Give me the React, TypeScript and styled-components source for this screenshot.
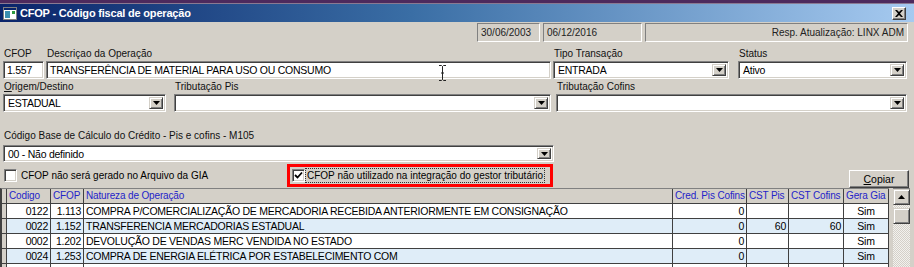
import React from 'react';
import styled, { createGlobalStyle } from 'styled-components';

const GlobalStyle = createGlobalStyle`
  html, body {
    margin: 0;
    padding: 0;
    background: #d4d0c8;
  }
  body {
    font-family: "Liberation Sans", Arial, sans-serif;
    font-size: 10px;
    color: #000;
  }
`;

type GridRowType = {
  cod: string;
  cfop: string;
  nat: string;
  cred: string;
  pis: string;
  cofins: string;
  gia: string;
};

const rows: GridRowType[] = [
  { cod: '0122', cfop: '1.113', nat: 'COMPRA P/COMERCIALIZAÇÃO DE MERCADORIA RECEBIDA ANTERIORMENTE EM CONSIGNAÇÃO', cred: '0', pis: '', cofins: '', gia: 'Sim' },
  { cod: '0022', cfop: '1.152', nat: 'TRANSFERENCIA MERCADORIAS ESTADUAL', cred: '0', pis: '60', cofins: '60', gia: 'Sim' },
  { cod: '0002', cfop: '1.202', nat: 'DEVOLUÇÃO DE VENDAS MERC VENDIDA NO ESTADO', cred: '0', pis: '', cofins: '', gia: 'Sim' },
  { cod: '0024', cfop: '1.253', nat: 'COMPRA DE ENERGIA ELÉTRICA POR ESTABELECIMENTO COM', cred: '0', pis: '', cofins: '', gia: 'Sim' },
  // last row only peeks in at the bottom edge
  { cod: '', cfop: '', nat: '', cred: '', pis: '', cofins: '', gia: '' },
];

const COLS = '5px 44px 33px 589px 74px 42px 55px 45px';

const App = () => {
  return (
    <>
      <GlobalStyle />
      <Window>
        <TopStrip />
        <TitleBar>
          <TitleIcon width="14" height="13" viewBox="0 0 14 13">
            <rect x="0.5" y="0.5" width="13" height="12" fill="#fff" stroke="#808080" />
            <rect x="1" y="1" width="12" height="2" fill="#0a246a" />
            <rect x="2" y="4" width="5" height="7" fill="#3a8fb0" />
            <rect x="9" y="4" width="3" height="3" fill="#2e9a3e" />
          </TitleIcon>
          <TitleText>CFOP - Código fiscal de operação</TitleText>
          <CloseButton>
            <svg width="8" height="7" viewBox="0 0 8 7">
              <path d="M0 0 L2 0 L4 2 L6 0 L8 0 L5 3.5 L8 7 L6 7 L4 5 L2 7 L0 7 L3 3.5 Z" fill="#000" />
            </svg>
          </CloseButton>
        </TitleBar>

        <InfoRow>
          <InfoPanel $w={63}>30/06/2003</InfoPanel>
          <InfoPanel $w={99}>06/12/2016</InfoPanel>
          <InfoPanel $w={263} $right>Resp. Atualização: LINX ADM</InfoPanel>
        </InfoRow>

        <Form>
          <FieldRow $top={6}>
            <Field $w={41}>
              <Label>CFOP</Label>
              <TextBox>1.557</TextBox>
            </Field>
            <Field $w={505} $ml={2}>
              <Label>Descriçao da Operação</Label>
              <TextBox>TRANSFERÊNCIA DE MATERIAL PARA USO OU CONSUMO</TextBox>
            </Field>
            <Field $w={176} $ml={2}>
              <Label>Tipo Transação</Label>
              <Combo value="ENTRADA" />
            </Field>
            <Field $w={169} $ml={9}>
              <Label>Status</Label>
              <Combo value="Ativo" />
            </Field>
          </FieldRow>

          <FieldRow $top={2}>
            <Field $w={163}>
              <Label><u>O</u>rigem/Destino</Label>
              <Combo value="ESTADUAL" />
            </Field>
            <Field $w={377} $ml={8}>
              <Label>Tributação Pis</Label>
              <Combo value="" />
            </Field>
            <Field $w={351} $ml={5}>
              <Label>Tributação Cofins</Label>
              <Combo value="" />
            </Field>
          </FieldRow>

          <FieldRow $top={18}>
            <Field $w={551} $gap={3}>
              <Label>Código Base de Cálculo do Crédito - Pis e cofins - M105</Label>
              <Combo value="00 - Não definido" $h={17} />
            </Field>
          </FieldRow>

          <CheckRow>
            <CheckItem>
              <CheckBox />
              <span>CFOP não será gerado no Arquivo da GIA</span>
            </CheckItem>
            <Highlight>
              <CheckBox>
                <svg width="9" height="9" viewBox="0 0 9 9">
                  <path d="M1 4 L3.5 6.5 L8 1.5" fill="none" stroke="#000" strokeWidth="1.8" />
                </svg>
              </CheckBox>
              <FocusText>CFOP não utilizado na integração do gestor tributário</FocusText>
            </Highlight>
            <Spacer />
            <Button>
              <u>C</u>opiar
            </Button>
          </CheckRow>
        </Form>

        <GridArea>
          <Grid>
            <HeaderRow>
              <IndicatorCell />
              <HeadCell>Codigo</HeadCell>
              <HeadCell>CFOP</HeadCell>
              <HeadCell>Natureza de Operação</HeadCell>
              <HeadCell>Cred. Pis Cofins</HeadCell>
              <HeadCell>CST Pis</HeadCell>
              <HeadCell>CST Cofins</HeadCell>
              <HeadCell>Gera Gia</HeadCell>
            </HeaderRow>
            {rows.map((r, i) => (
              <DataRow key={i} $alt={i % 2 === 1}>
                <IndicatorCell />
                <Cell $align="right">{r.cod}</Cell>
                <Cell $align="right">{r.cfop}</Cell>
                <Cell>{r.nat}</Cell>
                <Cell $align="right">{r.cred}</Cell>
                <Cell $align="right">{r.pis}</Cell>
                <Cell $align="right">{r.cofins}</Cell>
                <Cell $align="center">{r.gia}</Cell>
              </DataRow>
            ))}
          </Grid>
          <ScrollBar>
            <ScrollButton>
              <svg width="7" height="4" viewBox="0 0 7 4">
                <path d="M3.5 0 L7 4 L0 4 Z" fill="#000" />
              </svg>
            </ScrollButton>
            <ScrollThumb />
          </ScrollBar>
        </GridArea>

        <IBeam width="9" height="16" viewBox="0 0 9 16">
          <path d="M1 0.5 H3.5 L4.5 1.5 L5.5 0.5 H8 M4.5 1.5 V14.5 M1 15.5 H3.5 L4.5 14.5 L5.5 15.5 H8 M3 8 H6" fill="none" stroke="#222" strokeWidth="1" />
        </IBeam>
      </Window>
    </>
  );
};

const Combo = ({ value, $h }: { value: string; $h?: number }) => (
  <ComboBox $h={$h}>
    <ComboText>{value}</ComboText>
    <DropButton>
      <svg width="7" height="4" viewBox="0 0 7 4">
        <path d="M0 0 L7 0 L3.5 4 Z" fill="#000" />
      </svg>
    </DropButton>
  </ComboBox>
);

const Window = styled.div`
  position: relative;
  width: 914px;
  height: 267px;
  overflow: hidden;
  background: #d4d0c8;
  display: flex;
  flex-direction: column;
`;

const TopStrip = styled.div`
  height: 3px;
  background: #4d2a5d;
  border-bottom: 1px solid #8a7a92;
  flex-shrink: 0;
`;

const TitleBar = styled.div`
  height: 18px;
  flex-shrink: 0;
  display: flex;
  align-items: center;
  padding: 0 8px 0 3px;
  background: linear-gradient(to right, #0a246a 0%, #3a6ea5 45%, #a6caf0 100%);
`;

const TitleIcon = styled.svg`
  margin-right: 3px;
`;

const TitleText = styled.div`
  flex: 1;
  color: #fff;
  font-weight: bold;
  font-size: 11px;
  letter-spacing: -0.2px;
`;

const CloseButton = styled.div`
  width: 14px;
  height: 13px;
  box-sizing: border-box;
  background: #d4d0c8;
  border: 1px solid;
  border-color: #fff #404040 #404040 #fff;
  box-shadow: inset -1px -1px #808080;
  display: flex;
  align-items: center;
  justify-content: center;
`;

const InfoRow = styled.div`
  height: 19px;
  margin-top: 1px;
  display: flex;
  justify-content: flex-end;
  gap: 2px;
  padding-right: 6px;
  flex-shrink: 0;
`;

const InfoPanel = styled.div<{ $w: number; $right?: boolean }>`
  width: ${p => p.$w}px;
  box-sizing: border-box;
  border: 1px solid;
  border-color: #808080 #fff #fff #808080;
  padding: 0 3px;
  line-height: 17px;
  color: #222;
  text-align: ${p => (p.$right ? 'right' : 'left')};
  white-space: nowrap;
  & + & {
    margin-left: 1px;
  }
`;

const Form = styled.div`
  padding-left: 3px;
  flex-shrink: 0;
`;

const FieldRow = styled.div<{ $top: number }>`
  display: flex;
  margin-top: ${p => p.$top}px;
`;

const Field = styled.div<{ $w: number; $ml?: number; $gap?: number }>`
  width: ${p => p.$w}px;
  margin-left: ${p => p.$ml ?? 0}px;
  display: flex;
  flex-direction: column;
  gap: ${p => p.$gap ?? 1}px;
`;

const Label = styled.div`
  height: 12px;
  line-height: 12px;
  padding-left: 1px;
  white-space: nowrap;
  color: #111;
`;

const sunken = `
  box-sizing: border-box;
  background: #fff;
  border: 1px solid;
  border-color: #808080 #fff #fff #808080;
  box-shadow: inset 1px 1px #404040, inset -1px -1px #d4d0c8;
`;

const narrowText = `
  font-size: 10.5px;
  letter-spacing: -0.25px;
`;

const TextBox = styled.div`
  ${sunken}
  ${narrowText}
  height: 18px;
  padding: 0 3px;
  line-height: 16px;
  white-space: nowrap;
`;

const ComboBox = styled.div<{ $h?: number }>`
  ${sunken}
  height: ${p => p.$h ?? 18}px;
  display: flex;
  align-items: center;
  padding: 2px;
`;

const ComboText = styled.div`
  ${narrowText}
  flex: 1;
  padding-left: 2px;
  white-space: nowrap;
  overflow: hidden;
`;

const DropButton = styled.div`
  width: 14px;
  height: 100%;
  box-sizing: border-box;
  background: #d4d0c8;
  border: 1px solid;
  border-color: #d4d0c8 #404040 #404040 #d4d0c8;
  box-shadow: inset 1px 1px #fff, inset -1px -1px #808080;
  display: flex;
  align-items: center;
  justify-content: center;
`;

const CheckRow = styled.div`
  height: 26px;
  display: flex;
  align-items: center;
  padding-right: 5px;
`;

const CheckItem = styled.div`
  width: 284px;
  display: flex;
  align-items: center;
  gap: 4px;
  padding-left: 1px;
  box-sizing: border-box;
  white-space: nowrap;
`;

const CheckBox = styled.div`
  width: 13px;
  height: 13px;
  ${sunken}
  display: flex;
  align-items: center;
  justify-content: center;
  flex-shrink: 0;
`;

const Highlight = styled.div`
  width: 266px;
  height: 23px;
  box-sizing: border-box;
  border: 3px solid #ff0000;
  display: flex;
  align-items: center;
  padding-left: 2px;
  gap: 1px;
  white-space: nowrap;
`;

const FocusText = styled.span`
  outline: 1px dotted #333;
  padding: 0 1px;
  line-height: 13px;
`;

const Spacer = styled.div`
  flex: 1;
`;

const Button = styled.div`
  width: 60px;
  height: 18px;
  align-self: flex-end;
  box-sizing: border-box;
  background: #d4d0c8;
  border: 1px solid;
  border-color: #fff #404040 #404040 #fff;
  box-shadow: inset -1px -1px #808080;
  display: flex;
  align-items: center;
  justify-content: center;
  font-size: 10.5px;
`;

const GridArea = styled.div`
  flex: 1;
  display: flex;
  min-height: 0;
  padding-right: 4px;
`;

const Grid = styled.div`
  width: 889px;
  box-sizing: border-box;
  border-top: 1px solid #808080;
  border-left: 2px solid #404040;
  background: #fff;
  overflow: hidden;
`;

const HeaderRow = styled.div`
  display: grid;
  grid-template-columns: ${COLS};
  height: 15px;
  background: #d4d0c8;
  border-bottom: 1px solid #404040;
  box-sizing: border-box;
`;

const DataRow = styled.div<{ $alt: boolean }>`
  display: grid;
  grid-template-columns: ${COLS};
  height: 15px;
  box-sizing: border-box;
  border-bottom: 1px solid #404040;
  background: ${p => (p.$alt ? '#dfedf8' : '#fff')};
`;

const IndicatorCell = styled.div`
  background: #d4d0c8;
  border-right: 1px solid #404040;
`;

const HeadCell = styled.div`
  border-right: 1px solid #404040;
  padding: 0 2px;
  line-height: 14px;
  color: #2424c8;
  white-space: nowrap;
  overflow: hidden;
  letter-spacing: -0.15px;
`;

const Cell = styled.div<{ $align?: 'left' | 'right' | 'center' }>`
  ${narrowText}
  border-right: 1px solid #404040;
  padding: 0 2px;
  line-height: 14px;
  text-align: ${p => p.$align ?? 'left'};
  white-space: nowrap;
  overflow: hidden;
`;

const ScrollBar = styled.div`
  width: 17px;
  margin-left: 4px;
  box-sizing: border-box;
  border-top: 1px solid #808080;
  background: repeating-conic-gradient(#f2f1ee 0 25%, #d4d0c8 0 50%) 0 0 / 2px 2px;
  display: flex;
  flex-direction: column;
`;

const ScrollButton = styled.div`
  height: 16px;
  box-sizing: border-box;
  background: #d4d0c8;
  border: 1px solid;
  border-color: #d4d0c8 #404040 #404040 #d4d0c8;
  box-shadow: inset 1px 1px #fff, inset -1px -1px #808080;
  display: flex;
  align-items: center;
  justify-content: center;
`;

const ScrollThumb = styled(ScrollButton)`
  margin-top: 3px;
`;

const IBeam = styled.svg`
  position: absolute;
  left: 438px;
  top: 65px;
`;

export default App;
